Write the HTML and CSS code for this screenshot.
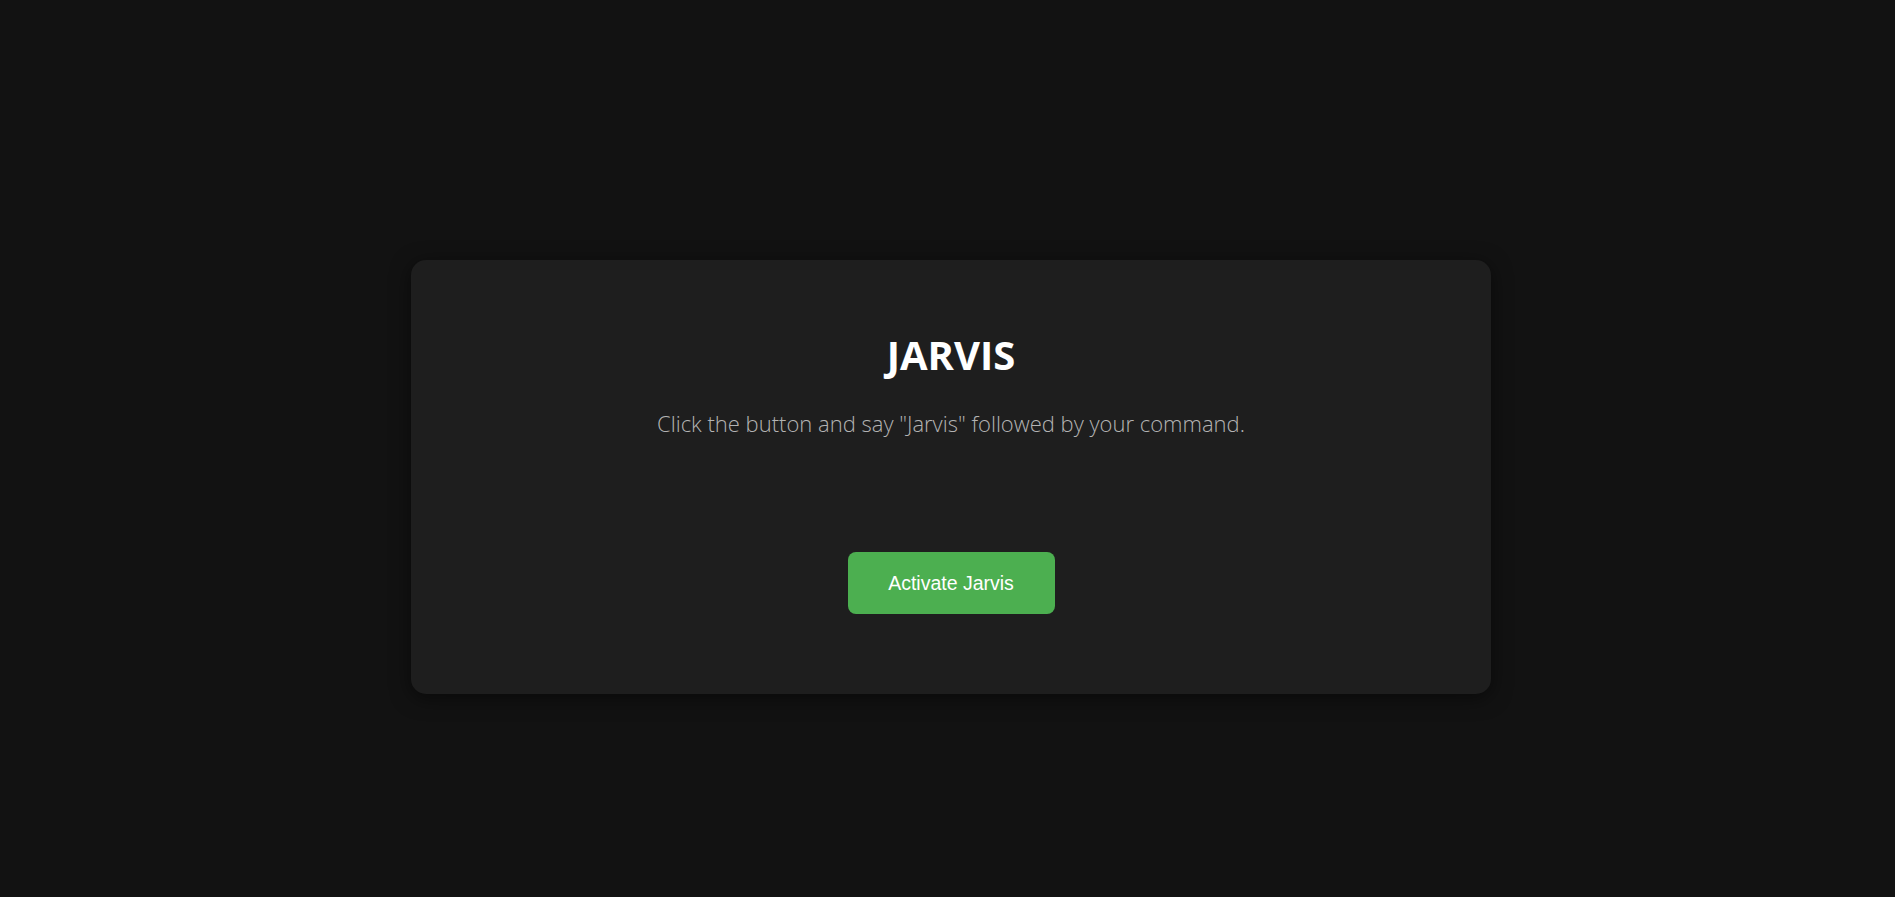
FILE: index.html
```html
<!DOCTYPE html>
<html lang="en">
<head>
<meta charset="utf-8">
<title>Jarvis</title>
<link rel="stylesheet" href="styles.css">
</head>
<body>
<main class="card">
  <h1 class="title">JARVIS</h1>
  <p class="subtitle">Click the button and say "Jarvis" followed by your command.</p>
  <div class="output"></div>
  <button class="activate" type="button">Activate Jarvis</button>
</main>
</body>
</html>
```

FILE: styles.css
```css
html, body {
  margin: 0;
  padding: 0;
}
body {
  background: #121212;
  min-height: 100vh;
  box-sizing: border-box;
  padding: 260px 0 0 411px;
  font-family: "Segoe UI", "Open Sans", sans-serif;
}
.card {
  width: 1080px;
  height: 434px;
  box-sizing: border-box;
  background: #1e1e1e;
  border-radius: 15px;
  box-shadow: 0 4px 20px rgba(0, 0, 0, 0.5);
  display: flex;
  flex-direction: column;
  align-items: center;
  padding-top: 71px;
}
.title {
  margin: 0;
  font-size: 40px;
  line-height: 48px;
  font-weight: 700;
  color: #ffffff;
}
.subtitle {
  margin: 30px 0 0;
  font-size: 22px;
  line-height: 28px;
  font-weight: 300;
  color: #b3b3b3;
}
.output {
  height: 115px;
}
.activate {
  width: 207px;
  height: 62px;
  background: #4caf50;
  color: #ffffff;
  border: none;
  border-radius: 8px;
  font-family: "Liberation Sans", Arial, sans-serif;
  font-size: 19.5px;
  cursor: pointer;
}
```
